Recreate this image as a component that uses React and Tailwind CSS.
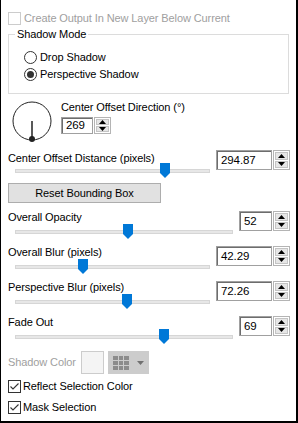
const font = { fontFamily: '"Liberation Sans", Arial, sans-serif' };

function CheckBox({ checked, disabled }) {
  return (
    <span
      className={`inline-flex items-center justify-center w-[13px] h-[13px] border bg-white ${
        disabled ? 'border-[#cccccc]' : 'border-[#333333]'
      }`}
    >
      {checked && (
        <svg width="11" height="11" viewBox="0 0 11 11">
          <path d="M1.5 5.5 L4 8 L9.5 2.5" fill="none" stroke="#333" strokeWidth="1.1" />
        </svg>
      )}
    </span>
  );
}

function Radio({ checked }) {
  return (
    <span className="inline-flex items-center justify-center w-[13px] h-[13px] rounded-full border border-[#333333] bg-white">
      {checked && <span className="w-[7px] h-[7px] rounded-full bg-[#333333]" />}
    </span>
  );
}

function Arrow({ up }) {
  return (
    <svg width="7" height="4" viewBox="0 0 7 4">
      <path d={up ? 'M0 4 L3.5 0 L7 4 Z' : 'M0 0 L3.5 4 L7 0 Z'} fill="#000" />
    </svg>
  );
}

function Spin({ value, inputW, h }) {
  return (
    <div className={`flex ${h}`}>
      <div className={`${inputW} border border-[#a0a0a0]`}>
        <div className="h-full border-l border-t border-[#6d6d6d] pl-[3px] text-[11.5px] leading-none flex items-center text-black">
          {value}
        </div>
      </div>
      <div className="ml-[1px] w-[17px] flex flex-col gap-[1px] border border-[#b4b4b4] p-[1px]">
        <div className="flex-1 flex items-center justify-center bg-[#e6e6e6] border border-[#c4c4c4]">
          <Arrow up />
        </div>
        <div className="flex-1 flex items-center justify-center bg-[#e6e6e6] border border-[#c4c4c4]">
          <Arrow />
        </div>
      </div>
    </div>
  );
}

// thumb offset follows the value along the track
function Slider({ w, value, max }) {
  const left = Math.round((value / max) * (parseInt(w.match(/\d+/)[0], 10) - 10));
  return (
    <div className={`relative h-[16px] ${w}`}>
      <div className="absolute left-0 right-0 top-[6px] h-[4px] bg-[#e7e7e7] border border-[#d6d6d6]" />
      <svg className="absolute top-0" style={{ left }} width="10" height="15" viewBox="0 0 10 15">
        <path d="M0 0 H10 V10 L5 15 L0 10 Z" fill="#0078d7" />
      </svg>
    </div>
  );
}

function SliderBlock({ label, value, max, spinValue, long }) {
  return (
    <div className="flex justify-between h-[35px]">
      <div className="flex flex-col">
        <div className="h-[14px] leading-[14px] whitespace-nowrap">{label}</div>
        <div className="ml-[7px]">
          <Slider w={long ? 'w-[218px]' : 'w-[195px]'} value={value} max={max} />
        </div>
      </div>
      <div className="mt-[1px]">
        <Spin value={spinValue} inputW={long ? 'w-[33px]' : 'w-[56px]'} h="h-[20px]" />
      </div>
    </div>
  );
}

export default function App() {
  return (
    <div
      className="w-[298px] h-[423px] bg-white border-l border-r-2 border-b-2 border-black pl-[7px] pr-[6px] pt-[11px] text-[11px] tracking-[-0.1px] text-black overflow-hidden"
      style={font}
    >
      {/* disabled option */}
      <div className="flex items-center h-[14px] gap-[3px] text-[#a0a0a0]">
        <CheckBox disabled />
        <span className="whitespace-nowrap">Create Output In New Layer Below Current</span>
      </div>

      {/* shadow mode group */}
      <div className="relative mt-[9px] w-[281px] h-[60px] border border-[#dcdcdc] pl-[15px] pt-[15px]">
        <span className="absolute -top-[8px] left-[6px] bg-white px-[2px] leading-[14px]">Shadow Mode</span>
        <div className="flex items-center gap-[3px] h-[14px]">
          <Radio />
          <span>Drop Shadow</span>
        </div>
        <div className="flex items-center gap-[3px] h-[14px] mt-[3px]">
          <Radio checked />
          <span>Perspective Shadow</span>
        </div>
      </div>

      {/* direction dial */}
      <div className="flex h-[50px]">
        <svg className="mt-[5px]" width="44" height="46" viewBox="0 0 44 46">
          <circle cx="24" cy="22" r="19" fill="none" stroke="#222" strokeWidth="1" />
          <line x1="24" y1="22" x2="24" y2="40" stroke="#222" strokeWidth="1.5" />
          <circle cx="24" cy="40" r="3" fill="#222" />
        </svg>
        <div className="ml-[9px] mt-[6px] flex flex-col">
          <div className="h-[14px] leading-[14px] whitespace-nowrap">Center Offset Direction (°)</div>
          <div className="mt-[3px]">
            <Spin value="269" inputW="w-[32px]" h="h-[17px]" />
          </div>
        </div>
      </div>

      {/* distance */}
      <div className="flex justify-between mt-[7px]">
        <div className="flex flex-col">
          <div className="h-[14px] leading-[14px] whitespace-nowrap">Center Offset Distance (pixels)</div>
          <div className="ml-[7px] -mt-[2px]">
            <Slider w="w-[195px]" value={294.87} max={375} />
          </div>
        </div>
        <div className="-mt-[1px]">
          <Spin value="294.87" inputW="w-[56px]" h="h-[20px]" />
        </div>
      </div>

      <button className="mt-[4px] w-[153px] h-[20px] bg-[#e1e1e1] border border-[#adadad] text-black">
        Reset Bounding Box
      </button>

      <div className="mt-[7px]">
        <SliderBlock label="Overall Opacity" value={52} max={100} spinValue="52" long />
        <SliderBlock label="Overall Blur (pixels)" value={42.29} max={125} spinValue="42.29" />
        <SliderBlock label="Perspective Blur (pixels)" value={72.26} max={125} spinValue="72.26" />
        <SliderBlock label="Fade Out" value={69} max={100} spinValue="69" long />
      </div>

      {/* shadow colour */}
      <div className="flex items-center h-[23px] mt-[1px]">
        <span className="w-[73px] text-[#a0a0a0] whitespace-nowrap">Shadow Color</span>
        <div className="w-[23px] h-[23px] border border-[#cccccc] bg-[#f4f4f4]" />
        <div className="ml-[4px] w-[41px] h-[23px] bg-[#cccccc] flex items-center pl-[5px] gap-[8px]">
          <div className="grid grid-cols-3 gap-[1px] w-[16px] h-[14px]">
            {[...Array(9)].map((_, i) => (
              <div key={i} className="bg-[#8c8c8c]" />
            ))}
          </div>
          <svg width="7" height="4" viewBox="0 0 7 4">
            <path d="M0 0 L3.5 4 L7 0 Z" fill="#707070" />
          </svg>
        </div>
      </div>

      <div className="flex items-center h-[14px] mt-[5px] gap-[2px]">
        <CheckBox checked />
        <span>Reflect Selection Color</span>
      </div>
      <div className="flex items-center h-[14px] mt-[7px] gap-[2px]">
        <CheckBox checked />
        <span>Mask Selection</span>
      </div>
    </div>
  );
}
